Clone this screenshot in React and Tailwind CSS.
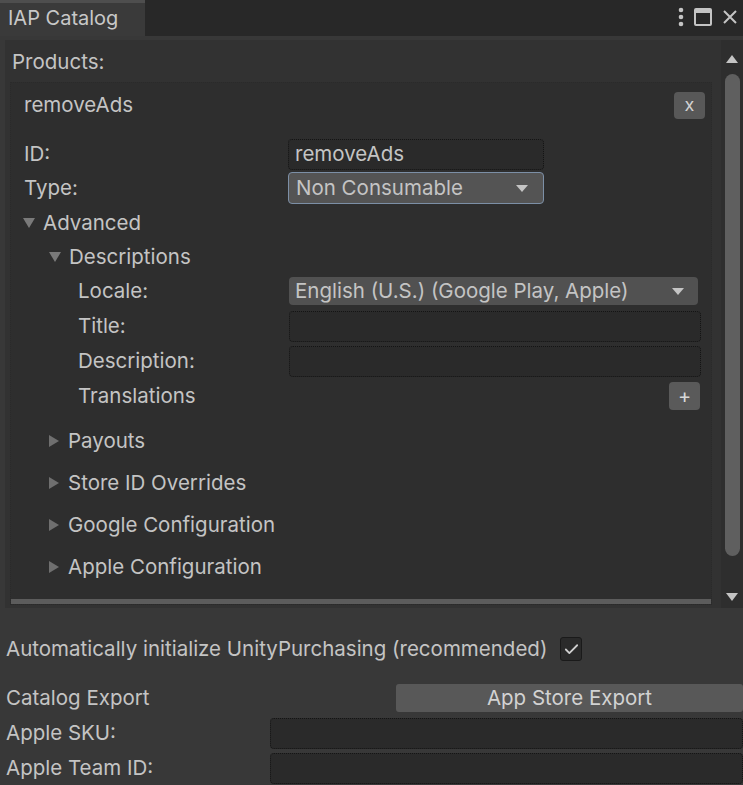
import { Check } from "lucide-react";

const label = "text-[#c4c4c4]";

function Tri({ open }) {
  return open ? (
    <svg width="14" height="12" viewBox="0 0 14 12" className="shrink-0">
      <path d="M1 1 H13 L7 11 Z" fill="#7a7a7a" />
    </svg>
  ) : (
    <svg width="12" height="14" viewBox="0 0 12 14" className="shrink-0">
      <path d="M1 1 V13 L11 7 Z" fill="#6f6f6f" />
    </svg>
  );
}

function Caret() {
  return (
    <svg width="14" height="9" viewBox="0 0 14 9">
      <path d="M1 1 H13 L7 8 Z" fill="#c4c4c4" />
    </svg>
  );
}

function Field({ className = "", children }) {
  return (
    <div
      className={`flex items-center rounded-[4px] border border-dotted border-[#141414] bg-[#2a2a2a] px-[6px] ${className}`}
    >
      {children}
    </div>
  );
}

function Foldout({ children }) {
  return (
    <div className="flex h-[42px] items-center gap-[8px] pl-[37px]">
      <Tri />
      <span>{children}</span>
    </div>
  );
}

export default function App() {
  return (
    <div
      className={`flex h-[785px] w-[743px] flex-col overflow-hidden bg-[#383838] text-[20.5px] ${label}`}
      style={{ fontFamily: "Inter, 'Noto Sans', sans-serif" }}
    >
      {/* Title bar */}
      <div className="flex h-[36px] shrink-0 items-stretch bg-[#282828]">
        <div className="flex w-[145px] items-center border-t-[3px] border-[#4e4e4e] bg-[#3a3a3a] pl-[8px] pb-[3px] text-[20px] text-[#c8c8c8]">
          IAP Catalog
        </div>
        <div className="flex-1" />
        <div className="flex items-center gap-[10px] pr-[5px] pb-[2px]">
          <svg width="6" height="20" viewBox="0 0 6 20">
            <circle cx="3" cy="3" r="2.3" fill="#c4c4c4" />
            <circle cx="3" cy="10" r="2.3" fill="#c4c4c4" />
            <circle cx="3" cy="17" r="2.3" fill="#c4c4c4" />
          </svg>
          <svg width="18" height="18" viewBox="0 0 18 18">
            <rect x="1" y="1" width="16" height="16" rx="1" fill="none" stroke="#c4c4c4" strokeWidth="2" />
            <rect x="1" y="1" width="16" height="4" fill="#c4c4c4" />
          </svg>
          <svg width="16" height="16" viewBox="0 0 16 16">
            <path d="M2 2 L14 14 M14 2 L2 14" stroke="#c4c4c4" strokeWidth="2" />
          </svg>
        </div>
      </div>

      {/* Scroll view */}
      <div className="mt-[4px] flex h-[568px] shrink-0">
        <div className="ml-[5px] flex flex-1 flex-col bg-[#323232]">
          <div className="flex h-[42px] shrink-0 items-center pl-[7px] pt-[2px]">Products:</div>
          <div className="ml-[5px] mr-[9px] flex flex-1 flex-col border border-dotted border-[#2a2a2a] bg-[#2e2e2e]">
            <div className="flex h-[44px] shrink-0 items-center justify-between pl-[13px] pr-[6px]">
              <span>removeAds</span>
              <div className="flex h-[27px] w-[31px] items-center justify-center rounded-[4px] bg-[#585858] pb-[2px] text-[18px] text-[#d2d2d2]">
                x
              </div>
            </div>
            <div className="mt-[10px] flex h-[34px] shrink-0 items-center pl-[13px]">
              <span className="w-[264px]">ID:</span>
              <Field className="h-[31px] w-[256px]">removeAds</Field>
            </div>
            <div className="flex h-[34px] shrink-0 items-center pl-[13px]">
              <span className="w-[264px]">Type:</span>
              <div className="flex h-[32px] w-[256px] items-center justify-between rounded-[4px] border border-[#7c8fa6] bg-[#545454] pl-[7px] pr-[14px]">
                <span>Non Consumable</span>
                <Caret />
              </div>
            </div>
            <div className="flex h-[36px] shrink-0 items-center gap-[7px] pl-[11px]">
              <Tri open />
              <span>Advanced</span>
            </div>
            <div className="flex h-[32px] shrink-0 items-center gap-[7px] pl-[37px]">
              <Tri open />
              <span>Descriptions</span>
            </div>
            <div className="flex h-[36px] shrink-0 items-center pl-[67px]">
              <span className="w-[211px]">Locale:</span>
              <div className="flex h-[28px] w-[409px] items-center justify-between rounded-[4px] bg-[#515151] pl-[6px] pr-[13px]">
                <span>English (U.S.) (Google Play, Apple)</span>
                <Caret />
              </div>
            </div>
            <div className="flex h-[35px] shrink-0 items-center pl-[67px]">
              <span className="w-[211px]">Title:</span>
              <Field className="h-[31px] w-[412px]" />
            </div>
            <div className="flex h-[35px] shrink-0 items-center pl-[67px]">
              <span className="w-[211px]">Description:</span>
              <Field className="h-[31px] w-[412px]" />
            </div>
            <div className="flex h-[34px] shrink-0 items-center justify-between pl-[67px] pr-[11px]">
              <span>Translations</span>
              <div className="flex h-[28px] w-[31px] items-center justify-center rounded-[4px] bg-[#5a5a5a] text-[20px] text-[#d8d8d8]">
                +
              </div>
            </div>
            <div className="h-[7px] shrink-0" />
            <Foldout>Payouts</Foldout>
            <Foldout>Store ID Overrides</Foldout>
            <Foldout>Google Configuration</Foldout>
            <Foldout>Apple Configuration</Foldout>
            <div className="flex-1" />
            <div className="h-[5px] bg-[#5c5c5c]" />
          </div>
          <div className="h-[3px]" />
        </div>
        {/* Scrollbar */}
        <div className="flex w-[22px] flex-col items-center bg-[#2e2e2e] pt-[14px] pb-[6px]">
          <svg width="14" height="10" viewBox="0 0 14 10">
            <path d="M1 9 H13 L7 1 Z" fill="#c4c4c4" />
          </svg>
          <div className="mt-[10px] w-[15px] flex-1 rounded-full bg-[#5f5f5f]" />
          <div className="h-[36px]" />
          <svg width="14" height="10" viewBox="0 0 14 10">
            <path d="M1 1 H13 L7 9 Z" fill="#c4c4c4" />
          </svg>
        </div>
      </div>

      {/* Bottom settings */}
      <div className="flex h-[72px] shrink-0 items-center gap-[13px] pl-[6px] pt-[10px]">
        <span>Automatically initialize UnityPurchasing (recommended)</span>
        <div className="flex h-[24px] w-[22px] items-center justify-center rounded-[3px] border border-[#1a1a1a] bg-[#2a2a2a]">
          <Check size={17} strokeWidth={2.5} color="#d0d0d0" />
        </div>
      </div>
      <div className="flex h-[36px] shrink-0 items-center justify-between pl-[6px]">
        <span>Catalog Export</span>
        <div className="flex h-[28px] w-[347px] items-center justify-center rounded-[3px] bg-[#585858] text-[#d2d2d2]">
          App Store Export
        </div>
      </div>
      <div className="flex h-[35px] shrink-0 items-center justify-between pl-[6px]">
        <span>Apple SKU:</span>
        <Field className="h-[31px] w-[473px]" />
      </div>
      <div className="flex h-[35px] shrink-0 items-center justify-between pl-[6px]">
        <span>Apple Team ID:</span>
        <Field className="h-[31px] w-[473px]" />
      </div>
    </div>
  );
}
